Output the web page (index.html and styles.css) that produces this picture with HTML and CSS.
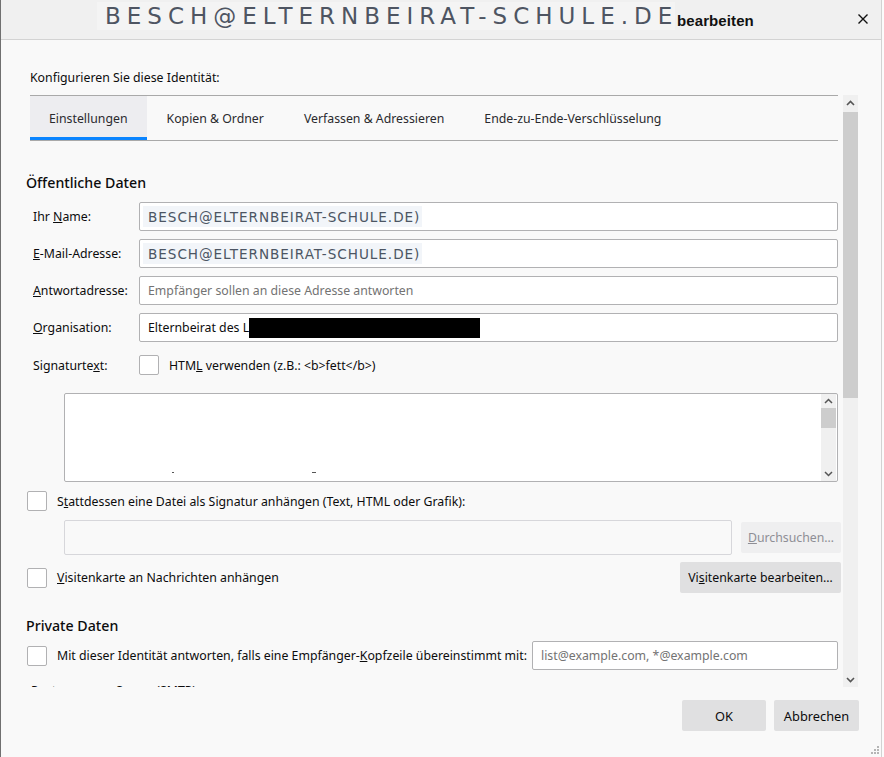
FILE: index.html
```html
<!DOCTYPE html>
<html lang="de">
<head>
<meta charset="utf-8">
<title>Identität bearbeiten</title>
<link rel="stylesheet" href="styles.css">
</head>
<body>
<div class="window">
  <header class="titlebar">
    <div class="title-name"><span>BESCH@ELTERNBEIRAT-SCHULE.DE</span></div>
    <span class="title-suffix">bearbeiten</span>
    <span class="close" aria-label="Schließen">
      <svg width="10" height="10" viewBox="0 0 10 10"><path d="M0.5 0.5L9.5 9.5M9.5 0.5L0.5 9.5" stroke="#111" stroke-width="1.4" fill="none"/></svg>
    </span>
  </header>

  <main class="dialog">
    <p class="intro">Konfigurieren Sie diese Identität:</p>

    <div class="scroller">
      <div class="scroll-content">
        <nav class="tabs">
          <span class="tab selected">Einstellungen</span>
          <span class="tab">Kopien &amp; Ordner</span>
          <span class="tab">Verfassen &amp; Adressieren</span>
          <span class="tab">Ende-zu-Ende-Verschlüsselung</span>
        </nav>

        <h2 class="section-title">Öffentliche Daten</h2>

        <div class="form-row">
          <label class="field-label">Ihr <u>N</u>ame:</label>
          <div class="input"><span class="pasted-name">BESCH@ELTERNBEIRAT-SCHULE.DE)</span></div>
        </div>
        <div class="form-row">
          <label class="field-label"><u>E</u>-Mail-Adresse:</label>
          <div class="input"><span class="pasted-name">BESCH@ELTERNBEIRAT-SCHULE.DE)</span></div>
        </div>
        <div class="form-row">
          <label class="field-label"><u>A</u>ntwortadresse:</label>
          <div class="input placeholder">Empfänger sollen an diese Adresse antworten</div>
        </div>
        <div class="form-row">
          <label class="field-label"><u>O</u>rganisation:</label>
          <div class="input">Elternbeirat des L<span class="redacted"></span></div>
        </div>

        <div class="sig-row">
          <label class="field-label">Signaturte<u>x</u>t:</label>
          <span class="checkbox"></span>
          <span class="check-text">HTM<u>L</u> verwenden (z.B.: &lt;b&gt;fett&lt;/b&gt;)</span>
        </div>

        <div class="textarea">
          <div class="textarea-body">
            <span class="cut-mark m1"></span>
            <span class="cut-mark m2"></span>
          </div>
          <div class="mini-scroll">
            <svg class="arrow" width="15" height="14" viewBox="0 0 15 14"><path d="M4 9L7.5 5.5L11 9" stroke="#555" stroke-width="1.5" fill="none"/></svg>
            <div class="mini-thumb"></div>
            <div class="mini-track"></div>
            <svg class="arrow" width="15" height="14" viewBox="0 0 15 14"><path d="M4 5L7.5 8.5L11 5" stroke="#555" stroke-width="1.5" fill="none"/></svg>
          </div>
        </div>

        <div class="check-row attach-row">
          <span class="checkbox"></span>
          <span class="check-text">S<u>t</u>attdessen eine Datei als Signatur anhängen (Text, HTML oder Grafik):</span>
        </div>

        <div class="file-row">
          <div class="file-input"></div>
          <span class="button disabled"><u>D</u>urchsuchen…</span>
        </div>

        <div class="vcard-row">
          <span class="checkbox"></span>
          <span class="check-text"><u>V</u>isitenkarte an Nachrichten anhängen</span>
          <span class="button vcard-button">Vi<u>s</u>itenkarte bearbeiten…</span>
        </div>

        <h2 class="section-title private">Private Daten</h2>

        <div class="reply-row">
          <span class="checkbox"></span>
          <span class="check-text">Mit dieser Identität antworten, falls eine Empfänger-<u>K</u>opfzeile übereinstimmt mit:</span>
          <div class="input placeholder reply-input">list@example.com, *@example.com</div>
        </div>

        <p class="smtp-label">Postausgangs-Server (SMTP):</p>
      </div>

      <div class="vscroll">
        <svg class="arrow" width="15" height="17" viewBox="0 0 15 17"><path d="M4 10L7.5 6.5L11 10" stroke="#555" stroke-width="1.6" fill="none"/></svg>
        <div class="thumb"></div>
        <div class="track"></div>
        <svg class="arrow" width="15" height="17" viewBox="0 0 15 17"><path d="M4 7L7.5 10.5L11 7" stroke="#555" stroke-width="1.6" fill="none"/></svg>
      </div>
    </div>

    <footer class="actions">
      <span class="button action">OK</span>
      <span class="button action">Abbrechen</span>
    </footer>
  </main>

  <svg class="grip" width="9" height="9" viewBox="0 0 9 9">
    <g fill="#b5b5b5">
      <rect x="7" y="1" width="2" height="2"/>
      <rect x="4" y="4" width="2" height="2"/><rect x="7" y="4" width="2" height="2"/>
      <rect x="1" y="7" width="2" height="2"/><rect x="4" y="7" width="2" height="2"/><rect x="7" y="7" width="2" height="2"/>
    </g>
  </svg>
</div>
</body>
</html>
```

FILE: styles.css
```css
* { box-sizing: border-box; }

html, body {
  margin: 0;
  padding: 0;
  background: #f9f9f9;
}

body {
  font-family: "Noto Sans", "Open Sans", sans-serif;
  font-size: 12.3px;
  color: #0c0c0d;
}

.window {
  position: relative;
  width: 884px;
  height: 757px;
  border-left: 1px solid #707070;
  border-right: 2px solid #fbfbfb;
  background: #f9f9f9;
  display: flex;
  flex-direction: column;
  overflow: hidden;
}

.window::after {
  content: "";
  position: absolute;
  top: 0;
  bottom: 0;
  right: 0;
  width: 1px;
  background: #d2d2d2;
}

/* ---------- title bar ---------- */
.titlebar {
  height: 40px;
  flex: none;
  background: #f0f0f0;
  border-bottom: 1px solid #d3d3d3;
  display: flex;
  align-items: center;
  padding-left: 96px;
}

.title-name {
  width: 578px;
  height: 28px;
  margin-top: -7px;
  background: #f4f4f4;
  overflow: hidden;
  white-space: nowrap;
  padding-left: 8px;
  display: flex;
  align-items: center;
}

.title-name span {
  font-family: "DejaVu Sans", sans-serif;
  font-size: 23px;
  letter-spacing: 6px;
  color: #4e5562;
}

.title-suffix {
  margin-left: 2px;
  font-family: "Liberation Sans", Arial, sans-serif;
  font-size: 15px;
  font-weight: bold;
  letter-spacing: 0.1px;
  color: #111;
  margin-top: 2px;
}

.close {
  margin-left: auto;
  margin-right: 14px;
  display: flex;
  margin-top: -1px;
}

/* ---------- dialog body ---------- */
.dialog {
  flex: 1;
  display: flex;
  flex-direction: column;
}

.intro {
  margin: 29px 0 0 29px;
  line-height: 17px;
  height: 17px;
}

.scroller {
  margin: 9px 0 0 19px;
  width: 838px;
  height: 592px;
  display: flex;
  overflow: hidden;
}

.scroll-content {
  flex: 1;
  min-width: 0;
  padding-right: 5px;
}

/* tabs */
.tabs {
  margin-left: 10px;
  height: 46px;
  border-top: 1px solid #a9a9a9;
  border-bottom: 1px solid #a9a9a9;
  display: flex;
}

.tab {
  display: flex;
  align-items: center;
  padding: 4px 19px 0;
  color: #2a2a2e;
  border-bottom: 3px solid transparent;
}

.tab + .tab { padding: 4px 20px 0; }

.tab.selected {
  background: #ededf0;
  border-bottom-color: #0a84ff;
}

.section-title {
  margin: 32px 0 0 6px;
  font-size: 14.2px;
  font-weight: 500;
  line-height: 20px;
  height: 20px;
  color: #0c0c0d;
}

/* form rows */
.form-row {
  display: flex;
  align-items: center;
  height: 29px;
  margin-top: 8px;
}

.section-title + .form-row { margin-top: 9px; }

.field-label {
  width: 119px;
  padding-left: 13px;
  flex: none;
  white-space: nowrap;
}

.input {
  flex: 1;
  height: 29px;
  background: #fff;
  border: 1px solid #b1b1b3;
  border-radius: 2px;
  display: flex;
  align-items: center;
  padding-left: 8px;
  white-space: nowrap;
  overflow: hidden;
}

.input.placeholder {
  color: #737373;
}

.pasted-name {
  background: #f2f5f9;
  height: 21px;
  display: flex;
  align-items: center;
  padding: 0 0 0 5px;
  margin-left: -5px;
  width: 279px;
  overflow: hidden;
  font-family: "DejaVu Sans", sans-serif;
  font-size: 13.6px;
  letter-spacing: 0.95px;
  color: #4c5563;
}

.redacted {
  display: inline-block;
  width: 231px;
  height: 20px;
  background: #000;
}

/* signature */
.sig-row {
  display: flex;
  align-items: center;
  margin-top: 13px;
  height: 20px;
}

.checkbox {
  flex: none;
  width: 20px;
  height: 20px;
  background: #fff;
  border: 1px solid #b1b1b3;
  border-radius: 2px;
}

.check-text {
  margin-left: 10px;
  white-space: nowrap;
}

.textarea {
  margin: 18px 0 0 44px;
  height: 89px;
  background: #fff;
  border: 1px solid #b1b1b3;
  border-radius: 2px;
  display: flex;
}

.textarea-body {
  flex: 1;
  position: relative;
}

.cut-mark {
  position: absolute;
  bottom: 8px;
  height: 1px;
  background: #555;
}
.cut-mark.m1 { left: 107px; width: 2px; }
.cut-mark.m2 { left: 247px; width: 4px; }

.mini-scroll {
  width: 15px;
  margin-right: 1px;
  background: #f0f0f0;
  display: flex;
  flex-direction: column;
}

.mini-scroll .arrow { flex: none; display: block; }

.mini-thumb {
  height: 20px;
  background: #cdcdcd;
  flex: none;
}

.mini-track { flex: 1; }

.check-row {
  display: flex;
  align-items: center;
  height: 20px;
  margin: 9px 0 0 7px;
}

.file-row {
  display: flex;
  align-items: center;
  margin: 9px 0 0 44px;
  height: 35px;
}

.file-input {
  flex: 1;
  height: 35px;
  border: 1px solid #d7d7db;
  border-radius: 2px;
  background: #f9f9f9;
}

.button {
  display: flex;
  align-items: center;
  justify-content: center;
  background: #e0e0e1;
  border-radius: 2px;
  height: 31px;
  white-space: nowrap;
  color: #0c0c0d;
}

.button.disabled {
  margin-left: 9px;
  margin-right: -3px;
  width: 100px;
  background: #efeff0;
  color: #8e8e95;
}

.vcard-row {
  display: flex;
  align-items: center;
  margin: 7px -3px 0 7px;
  height: 31px;
}

.vcard-button {
  margin-left: auto;
  width: 161px;
}

.section-title.private {
  margin-top: 23px;
}

.reply-row {
  display: flex;
  align-items: center;
  margin: 5px 0 0 7px;
  height: 29px;
}

.reply-input {
  margin-left: 5px;
  padding-left: 8px;
}

.smtp-label {
  margin: 13px 0 0 11px;
  line-height: 16px;
}

/* outer scrollbar */
.vscroll {
  flex: none;
  width: 15px;
  height: 593px;
  background: #f0f0f0;
  display: flex;
  flex-direction: column;
}

.vscroll .arrow { flex: none; display: block; }

.thumb {
  height: 286px;
  background: #cdcdcd;
  flex: none;
}

.track { flex: 1; }

/* footer */
.actions {
  display: flex;
  justify-content: flex-end;
  gap: 8px;
  margin-top: 13px;
  padding-right: 23px;
}

.button.action {
  width: 84px;
  height: 31px;
  font-size: 12.8px;
}

.button.action + .button.action { width: 85px; }

.grip {
  position: absolute;
  right: 3px;
  bottom: 3px;
}
```
